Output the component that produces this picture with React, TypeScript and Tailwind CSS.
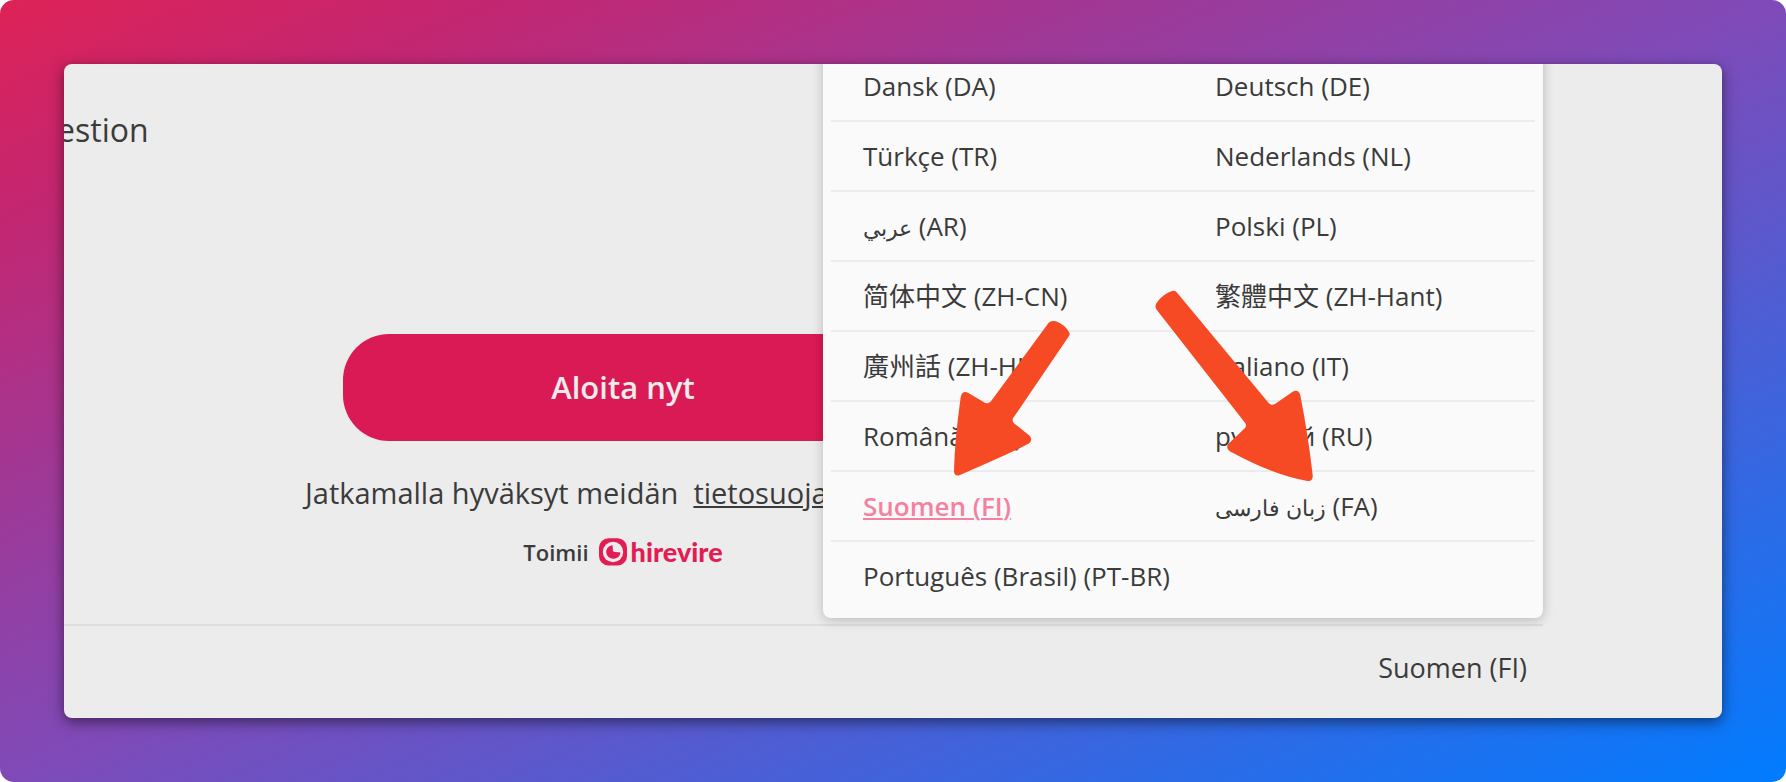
import { useState } from 'react';
import clsx from 'clsx';

type Language = {
  code: string;
  name: string;
  lang: string;
  arabicScript?: boolean;
};

const languages: Language[] = [
  { code: 'DA', name: 'Dansk', lang: 'da' },
  { code: 'DE', name: 'Deutsch', lang: 'de' },
  { code: 'TR', name: 'Türkçe', lang: 'tr' },
  { code: 'NL', name: 'Nederlands', lang: 'nl' },
  { code: 'AR', name: 'عربي', lang: 'ar', arabicScript: true },
  { code: 'PL', name: 'Polski', lang: 'pl' },
  { code: 'ZH-CN', name: '简体中文', lang: 'zh-CN' },
  { code: 'ZH-Hant', name: '繁體中文', lang: 'zh-Hant' },
  { code: 'ZH-HK', name: '廣州話', lang: 'zh-HK' },
  { code: 'IT', name: 'Italiano', lang: 'it' },
  { code: 'RO', name: 'Română', lang: 'ro' },
  { code: 'RU', name: 'русский', lang: 'ru' },
  { code: 'FI', name: 'Suomen', lang: 'fi' },
  { code: 'FA', name: 'زبان فارسی', lang: 'fa', arabicScript: true },
  { code: 'PT-BR', name: 'Português (Brasil)', lang: 'pt-BR' },
];

function HirevireLogo() {
  return (
    <span className="flex items-center gap-1 text-[#e21d55]">
      <svg className="h-7 w-7" viewBox="0 0 28 28" aria-hidden="true">
        <rect x="0" y="0.3" width="28" height="27.2" rx="9.5" fill="currentColor" />
        <circle cx="14" cy="14" r="10.2" fill="#ececec" />
        <path
          d="M13.6 7.2 C9.6 7.6 7.2 10.6 7.2 14.3 A7.3 7.3 0 0 0 21.4 15.6 C21.6 14.6 20.8 14.2 20 14.2 L15.6 13.9 C14.4 13.8 13.9 13.2 13.9 12 Z"
          fill="currentColor"
        />
      </svg>
      <span className="font-['Lato',sans-serif] text-[27px] leading-7 font-black">hirevire</span>
    </span>
  );
}

function LanguageMenu({ selected, onSelect }: { selected: string; onSelect: (code: string) => void }) {
  return (
    <div className="absolute right-[179px] bottom-[100px] w-[720px] rounded-lg bg-[#fafafa] p-2 shadow-[0_2px_12px_rgba(0,0,0,0.22)]">
      <ul className="grid grid-cols-2">
        {languages.map(language => (
          <li
            key={language.code}
            className="border-b-2 border-[#ececec] last:border-b-0"
          >
            <button
              lang={language.lang}
              onClick={() => onSelect(language.code)}
              className={clsx(
                'h-[68px] w-full pl-8 text-left text-[26px] leading-9 whitespace-nowrap',
                language.code === selected && 'font-semibold text-[#f5809f] underline'
              )}
            >
              <span className={clsx(language.arabicScript && 'text-[22px]')}>{language.name}</span> ({language.code})
            </button>
          </li>
        ))}
      </ul>

      {/* Arrow to Suomen */}
      <svg
        className="pointer-events-none absolute bottom-[141px] left-[129px] h-[157px] w-[120px] text-[#f64a24]"
        viewBox="396 60 360 471"
        aria-hidden="true"
      >
        <path
          d="M686 68 Q692 60 708 64 Q735 74 748 98 Q751 103 745 111 L579 355 Q576 361 581 369 L629 407 Q638 417 629 429 Q600 447 420 525 Q403 531 402 514 Q404 420 422 292 Q426 271 444 278 L492 307 Q503 314 513 304 Z"
          fill="currentColor"
        />
      </svg>

      {/* Arrow to Farsi */}
      <svg
        className="pointer-events-none absolute bottom-[136px] left-[331px] h-[192px] w-[160px] text-[#f64a24]"
        viewBox="42 30 480 576"
        aria-hidden="true"
      >
        <path
          d="M47 83 Q44 75 54 63 Q72 41 97 33 Q106 31 112 39 L386 369 Q394 378 405 372 L458 335 Q476 326 481 346 Q505 470 518 585 Q520 605 502 603 Q400 585 275 517 Q256 507 264 493 L315 444 Q321 437 315 428 L50 89 Z"
          fill="currentColor"
        />
      </svg>
    </div>
  );
}

export default function App() {
  const [selected, setSelected] = useState('FI');
  const current = languages.find(l => l.code === selected);

  return (
    <div className="flex min-h-screen flex-col rounded-[14px] bg-[linear-gradient(to_bottom_right,#de2256_0%,#c32671_14%,#9b3b9b_34%,#7f4ab8_50%,#007cff_100%)] p-16 font-['Open_Sans','Noto_Sans_CJK_SC',sans-serif] text-[#3b3b3b]">
      <div className="relative flex flex-1 flex-col overflow-hidden rounded-lg bg-[#ececec] shadow-[0_4px_14px_rgba(0,0,0,0.5)]">
        <main className="flex-1">
          <p className="-ml-[7px] pt-[46px] text-[32px] leading-10">estion</p>

          <div className="ml-[241px] flex w-[636px] flex-col items-center pt-[184px]">
            <button className="h-[107px] w-[560px] rounded-[46px] bg-[#da1a54] text-[31px] font-semibold text-[#ececec]">
              Aloita nyt
            </button>
            <p className="mt-8 self-start text-[29px] leading-10 whitespace-pre">
              Jatkamalla hyväksyt meidän{'  '}
              <a href="#" className="underline">tietosuoja</a>
            </p>
            <div className="mt-[23px] flex items-center gap-[10px]">
              <span className="text-[22px] leading-8 font-semibold">Toimii</span>
              <HirevireLogo />
            </div>
          </div>
        </main>

        <footer className="mr-[179px] flex h-[94px] items-center justify-end border-t-2 border-[#dedede] pr-4 pb-2">
          <button className="text-[27px] leading-9">{current?.name} ({current?.code})</button>
        </footer>

        <LanguageMenu selected={selected} onSelect={setSelected} />
      </div>
    </div>
  );
}
